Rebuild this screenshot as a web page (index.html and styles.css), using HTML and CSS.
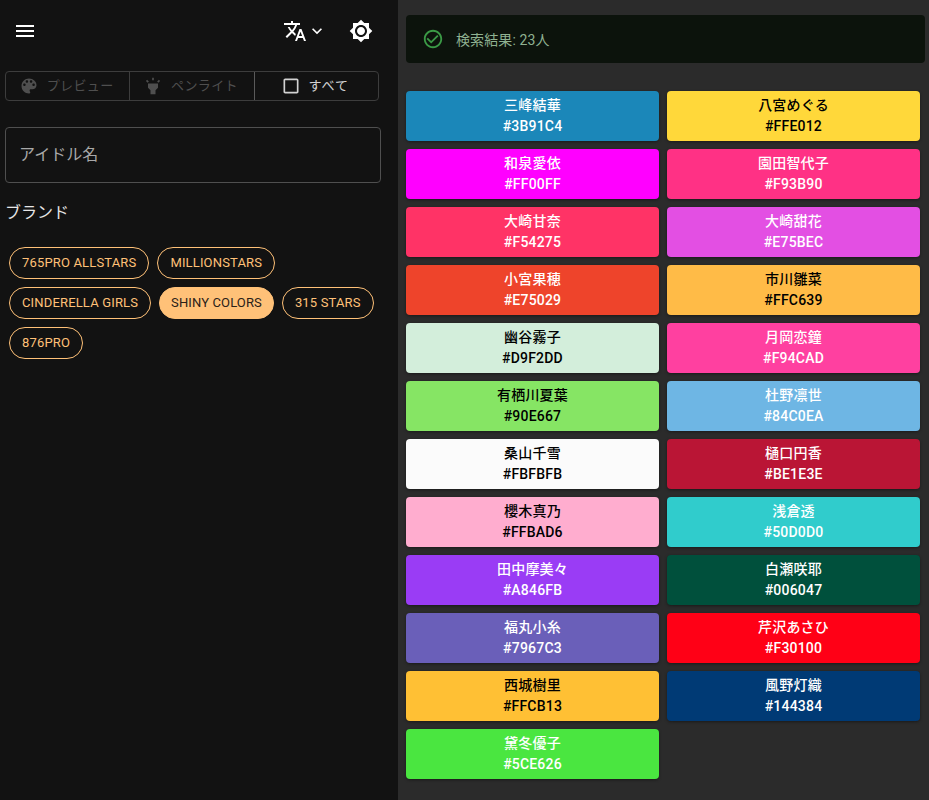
FILE: index.html

```html
<!DOCTYPE html>
<html lang="ja">
<head>
  <meta charset="UTF-8" />
  <meta name="viewport" content="width=device-width, initial-scale=1.0" />
  <title>アイドル検索</title>
  <link rel="stylesheet" href="styles.css">
</head>
<body>
  <aside class="sidebar">
    <div class="toolbar">
      <svg class="icon menu-icon" viewBox="0 0 24 24"><path d="M3 18h18v-2H3v2zm0-5h18v-2H3v2zm0-7v2h18V6H3z"/></svg>
      <div class="toolbar-right">
        <svg class="icon" viewBox="0 0 24 24"><path d="M12.87 15.07l-2.54-2.51.03-.03c1.74-1.94 2.98-4.17 3.71-6.53H17V4h-7V2H8v2H1v1.99h11.17C11.5 7.92 10.44 9.75 9 11.35 8.07 10.32 7.3 9.19 6.69 8h-2c.73 1.63 1.73 3.17 2.98 4.56l-5.09 5.02L4 19l5-5 3.11 3.11.76-2.04zM18.5 10h-2L12 22h2l1.12-3h4.75L21 22h2l-4.5-12zm-2.62 7l1.62-4.33L19.12 17h-3.24z"/></svg>
        <svg class="icon chevron" viewBox="0 0 24 24"><path d="M16.59 8.59L12 13.17 7.41 8.59 6 10l6 6 6-6z"/></svg>
        <svg class="icon theme-icon" viewBox="0 0 24 24"><path d="M20 8.69V4h-4.69L12 .69 8.69 4H4v4.69L.69 12 4 15.31V20h4.69L12 23.31 15.31 20H20v-4.69L23.31 12 20 8.69zM12 18c-3.31 0-6-2.69-6-6s2.69-6 6-6 6 2.69 6 6-2.69 6-6 6zm0-10c-2.21 0-4 1.79-4 4s1.79 4 4 4 4-1.79 4-4-1.79-4-4-4z"/></svg>
      </div>
    </div>

    <div class="toggle-group">
      <div class="toggle off">
        <svg class="icon small" viewBox="0 0 24 24"><path d="M12 3c-4.97 0-9 4.03-9 9s4.03 9 9 9c.83 0 1.5-.67 1.5-1.5 0-.39-.15-.74-.39-1.01-.23-.26-.38-.61-.38-.99 0-.83.67-1.5 1.5-1.5H16c2.76 0 5-2.24 5-5 0-4.42-4.03-8-9-8zm-5.5 9c-.83 0-1.5-.67-1.5-1.5S5.67 9 6.5 9 8 9.67 8 10.5 7.33 12 6.5 12zm3-4C8.67 8 8 7.33 8 6.5S8.67 5 9.5 5s1.5.67 1.5 1.5S10.33 8 9.5 8zm5 0c-.83 0-1.5-.67-1.5-1.5S13.67 5 14.5 5s1.5.67 1.5 1.5S15.33 8 14.5 8zm3 4c-.83 0-1.5-.67-1.5-1.5S16.67 9 17.5 9s1.5.67 1.5 1.5-.67 1.5-1.5 1.5z"/></svg>
        <span>プレビュー</span>
      </div>
      <div class="toggle off">
        <svg class="icon small" viewBox="0 0 24 24"><path d="M6 14l3 3v5h6v-5l3-3V9H6v5zm5-12h2v3h-2V2zM3.5 5.88l1.41-1.41 2.12 2.12L5.62 8 3.5 5.88zm13.46.71l2.12-2.12 1.41 1.41L18.38 8l-1.42-1.41z"/></svg>
        <span>ペンライト</span>
      </div>
      <div class="toggle on">
        <svg class="icon small" viewBox="0 0 24 24"><path d="M19 5v14H5V5h14m0-2H5c-1.1 0-2 .9-2 2v14c0 1.1.9 2 2 2h14c1.1 0 2-.9 2-2V5c0-1.1-.9-2-2-2z"/></svg>
        <span>すべて</span>
      </div>
    </div>

    <div class="name-field">アイドル名</div>

    <div class="brand-label">ブランド</div>
    <div class="chips">
      <span class="chip">765PRO ALLSTARS</span>
      <span class="chip">MILLIONSTARS</span>
      <span class="chip">CINDERELLA GIRLS</span>
      <span class="chip active">SHINY COLORS</span>
      <span class="chip">315 STARS</span>
      <span class="chip">876PRO</span>
    </div>
  </aside>

  <main class="results">
    <div class="alert">
      <svg class="icon" viewBox="0 0 24 24"><path d="M16.59 7.58L10 14.17l-3.59-3.58L5 12l5 5 8-8zM12 2C6.48 2 2 6.48 2 12s4.48 10 10 10 10-4.48 10-10S17.52 2 12 2zm0 18c-4.41 0-8-3.59-8-8s3.59-8 8-8 8 3.59 8 8-3.59 8-8 8z"/></svg>
      <span>検索結果: 23人</span>
    </div>
    <div class="cards">
      <div class="card" style="background:#1b87b9"><b>三峰結華</b><b>#3B91C4</b></div>
      <div class="card dark" style="background:#ffd83a"><b>八宮めぐる</b><b>#FFE012</b></div>
      <div class="card" style="background:#ff00ff"><b>和泉愛依</b><b>#FF00FF</b></div>
      <div class="card" style="background:#ff3185"><b>園田智代子</b><b>#F93B90</b></div>
      <div class="card" style="background:#ff3366"><b>大崎甘奈</b><b>#F54275</b></div>
      <div class="card" style="background:#e34fe3"><b>大崎甜花</b><b>#E75BEC</b></div>
      <div class="card" style="background:#ee442b"><b>小宮果穂</b><b>#E75029</b></div>
      <div class="card dark" style="background:#ffbb47"><b>市川雛菜</b><b>#FFC639</b></div>
      <div class="card dark" style="background:#d3eedb"><b>幽谷霧子</b><b>#D9F2DD</b></div>
      <div class="card" style="background:#ff40a0"><b>月岡恋鐘</b><b>#F94CAD</b></div>
      <div class="card dark" style="background:#86e564"><b>有栖川夏葉</b><b>#90E667</b></div>
      <div class="card" style="background:#6eb6e4"><b>杜野凛世</b><b>#84C0EA</b></div>
      <div class="card dark" style="background:#fbfbfb"><b>桑山千雪</b><b>#FBFBFB</b></div>
      <div class="card" style="background:#ba1535"><b>樋口円香</b><b>#BE1E3E</b></div>
      <div class="card dark" style="background:#ffadcf"><b>櫻木真乃</b><b>#FFBAD6</b></div>
      <div class="card" style="background:#30cccc"><b>浅倉透</b><b>#50D0D0</b></div>
      <div class="card" style="background:#9a3cf5"><b>田中摩美々</b><b>#A846FB</b></div>
      <div class="card" style="background:#00503c"><b>白瀬咲耶</b><b>#006047</b></div>
      <div class="card" style="background:#6a5fb9"><b>福丸小糸</b><b>#7967C3</b></div>
      <div class="card" style="background:#ff0016"><b>芹沢あさひ</b><b>#F30100</b></div>
      <div class="card dark" style="background:#ffc034"><b>西城樹里</b><b>#FFCB13</b></div>
      <div class="card" style="background:#003a75"><b>風野灯織</b><b>#144384</b></div>
      <div class="card" style="background:#4ae640"><b>黛冬優子</b><b>#5CE626</b></div>
    </div>
  </main>
</body>
</html>
```

FILE: styles.css

```css
* {
  box-sizing: border-box;
}
body {
  margin: 0;
  display: flex;
  height: 800px;
  overflow: hidden;
  font-family: Roboto, "Noto Sans CJK JP", sans-serif;
  color: #fff;
  background: #2b2b2b;
}
.icon {
  width: 24px;
  height: 24px;
  fill: currentColor;
  display: block;
}
.icon.small {
  width: 20px;
  height: 20px;
}

/* left panel */
.sidebar {
  width: 398px;
  flex-shrink: 0;
  background: #121212;
  padding: 0 17px 0 5px;
}
.toolbar {
  height: 62px;
  display: flex;
  align-items: center;
  justify-content: space-between;
  padding: 0 0 0 8px;
}
.toolbar-right {
  display: flex;
  align-items: center;
  padding-right: 8px;
}
.chevron {
  width: 20px;
  height: 20px;
}
.theme-icon {
  margin-left: 22px;
}
.toggle-group {
  margin-top: 9px;
  width: 374px;
  height: 30px;
  display: flex;
  border: 1px solid #3d3d3d;
  border-radius: 4px;
}
.toggle {
  flex: 1;
  display: flex;
  align-items: center;
  justify-content: center;
  gap: 8px;
  padding-right: 3px;
  font-size: 13px;
  letter-spacing: 0.4px;
  border-left: 1px solid #3d3d3d;
}
.toggle span {
  margin-top: -4px;
}
.toggle:first-child {
  border-left: 0;
}
.toggle.off {
  color: #4f4f4f;
}
.toggle.on {
  color: #d2d2d2;
  letter-spacing: 1px;
  border-left-color: #5a5a5a;
}
.name-field {
  margin-top: 26px;
  width: 376px;
  height: 56px;
  display: flex;
  align-items: center;
  padding: 0 13px 5px;
  border: 1px solid #4f4f4f;
  border-radius: 4px;
  font-size: 16px;
  color: #a8a8a8;
}
.brand-label {
  margin-top: 19px;
  font-size: 16px;
  line-height: 22px;
  color: #e6e6e6;
}
.chips {
  margin-top: 23px;
  padding: 0 4px;
  display: flex;
  flex-wrap: wrap;
  gap: 8px;
}
.chip {
  height: 32px;
  display: flex;
  align-items: center;
  padding: 0 12px 2px;
  border: 1px solid #ffc178;
  border-radius: 16px;
  font-size: 13px;
  letter-spacing: 0.16px;
  color: #ffc178;
}
.chip.active {
  padding: 0 11px 2px;
  letter-spacing: 0.12px;
  background: #ffc178;
  color: #2a2118;
}

/* right panel */
.results {
  flex: 1;
  padding: 15px 4px 0 8px;
}
.alert {
  height: 48px;
  display: flex;
  align-items: center;
  gap: 12px;
  padding: 0 16px;
  border-radius: 4px;
  background: #0c130c;
  color: #8fb191;
  font-size: 14px;
  letter-spacing: 0.1px;
}
.alert .icon {
  width: 22px;
  height: 22px;
  color: #3b9a46;
}
.cards {
  margin-top: 28px;
  width: 514px;
  display: grid;
  grid-template-columns: 1fr 1fr;
  gap: 8px;
}
.card {
  height: 50px;
  display: flex;
  flex-direction: column;
  align-items: center;
  justify-content: center;
  border-radius: 4px;
  font-size: 14px;
  line-height: 20px;
  letter-spacing: 0.2px;
  color: #fff;
  box-shadow: 0 1px 3px rgba(0,0,0,0.4);
}
.card.dark {
  color: #000;
}
.card b {
  font-weight: 500;
}
.card b:first-child {
  margin: -1px 0 1px;
}
```
